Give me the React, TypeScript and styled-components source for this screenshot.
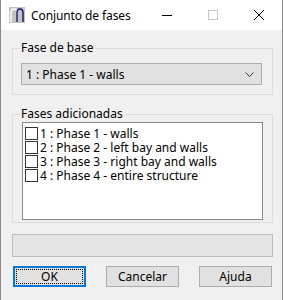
import styled, { createGlobalStyle } from "styled-components";

const Global = createGlobalStyle`
  html, body {
    margin: 0;
    padding: 0;
    background: #f0f0f0;
  }
  body {
    font-family: "Noto Sans", "Segoe UI", sans-serif;
    font-size: 12px;
    color: #000;
  }
`;

const Window = styled.div`
  width: 283px;
  height: 300px;
  box-sizing: border-box;
  border-left: 1px solid #8a8a8a;
  border-right: 1px solid #8a8a8a;
  background: #f0f0f0;
  display: flex;
  flex-direction: column;
  overflow: hidden;
`;

const TitleBar = styled.div`
  height: 30px;
  background: #fff;
  display: flex;
  align-items: center;
  padding-left: 8px;
  flex-shrink: 0;
`;

const Title = styled.span`
  margin-left: 6px;
  margin-right: auto;
  font-size: 12px;
  letter-spacing: -0.1px;
`;

const Caption = styled.div`
  width: 46px;
  height: 30px;
  flex-shrink: 0;
  display: flex;
  align-items: center;
  justify-content: center;
`;

const MinDash = styled.div`
  width: 10px;
  height: 0;
  border-top: 1px solid #000;
  margin-top: 1px;
`;

const Body = styled.div`
  padding: 11px 9px 0 11px;
  display: flex;
  flex-direction: column;
`;

const Group = styled.fieldset<{ $h: number }>`
  margin: 0;
  border: 1px solid #dcdcdc;
  padding: 0 9px 0 8px;
  height: ${(p) => p.$h}px;
  box-sizing: border-box;
  min-width: 0;
  & + & {
    margin-top: 12px;
  }
`;

const Legend = styled.legend`
  padding: 0 1px;
  margin-left: -1px;
  font-size: 12px;
  line-height: 14px;
`;

const Combo = styled.div`
  margin-top: 8px;
  margin-right: 1px;
  height: 22px;
  box-sizing: border-box;
  border: 1px solid #adadad;
  background: #e1e1e1;
  display: flex;
  align-items: center;
  padding-left: 4px;
  padding-right: 7px;
  justify-content: space-between;
`;

const ListBox = styled.div`
  margin-top: 1px;
  margin-left: 1px;
  height: 98px;
  box-sizing: border-box;
  border: 1px solid #828790;
  background: #fff;
  padding: 4px 2px;
  display: flex;
  flex-direction: column;
`;

const Item = styled.label`
  display: flex;
  align-items: flex-start;
  height: 14px;
  line-height: 14px;
  white-space: nowrap;
`;

const Box = styled.span`
  width: 13px;
  height: 13px;
  box-sizing: border-box;
  border: 1px solid #333;
  background: #fff;
  margin-right: 2px;
  flex-shrink: 0;
`;

const Status = styled.div`
  margin-top: 11px;
  height: 23px;
  box-sizing: border-box;
  border: 1px solid #bcbcbc;
  background: #e5e5e5;
`;

const Buttons = styled.div`
  margin-top: 9px;
  display: flex;
  justify-content: space-between;
  padding-left: 1px;
  padding-right: 1px;
`;

const Btn = styled.button<{ $def?: boolean }>`
  width: 73px;
  height: 21px;
  box-sizing: border-box;
  border: 1px solid ${(p) => (p.$def ? "#0078d7" : "#adadad")};
  background: #e1e1e1;
  font-family: "Noto Sans", "Segoe UI", sans-serif;
  font-size: 12px;
  padding: 0;
  color: #000;
  position: relative;
  ${(p) =>
    p.$def &&
    `
    box-shadow: inset 0 0 0 1px #0078d7;
    &::after {
      content: "";
      position: absolute;
      inset: 2px;
      border: 1px dotted #000;
    }
  `}
`;

const AppIcon = () => (
  <svg width="16" height="16" viewBox="0 0 16 16">
    <rect width="16" height="16" fill="#c3c3c3" />
    <path d="M2 15 V6 Q2 2 5 2 Q8 2 8 6 V15" fill="none" stroke="#fff" strokeWidth="1.5" />
    <path d="M8 15 V6 Q8 2 11 2 Q14 2 14 6 V15" fill="none" stroke="#1b1b6e" strokeWidth="1.5" />
  </svg>
);

const phases = [
  "1 : Phase 1 - walls",
  "2 : Phase 2 - left bay and walls",
  "3 : Phase 3 - right bay and walls",
  "4 : Phase 4 - entire structure",
];

export default function App() {
  return (
    <>
      <Global />
      <Window>
        <TitleBar>
          <AppIcon />
          <Title>Conjunto de fases</Title>
          <Caption>
            <MinDash />
          </Caption>
          <Caption>
            <svg width="10" height="10" viewBox="0 0 10 10">
              <rect x="0.5" y="0.5" width="9" height="9" fill="none" stroke="#c8c8c8" />
            </svg>
          </Caption>
          <Caption>
            <svg width="10" height="10" viewBox="0 0 10 10">
              <path d="M0 0 L10 10 M10 0 L0 10" stroke="#000" strokeWidth="1" />
            </svg>
          </Caption>
        </TitleBar>
        <Body>
          <Group $h={54}>
            <Legend>Fase de base</Legend>
            <Combo>
              <span>1 : Phase 1 - walls</span>
              <svg width="9" height="5" viewBox="0 0 9 5">
                <path d="M0.5 0.5 L4.5 4.5 L8.5 0.5" fill="none" stroke="#333" />
              </svg>
            </Combo>
          </Group>
          <Group $h={116}>
            <Legend>Fases adicionadas</Legend>
            <ListBox>
              {phases.map((p) => (
                <Item key={p}>
                  <Box />
                  {p}
                </Item>
              ))}
            </ListBox>
          </Group>
          <Status />
          <Buttons>
            <Btn $def>OK</Btn>
            <Btn>Cancelar</Btn>
            <Btn>Ajuda</Btn>
          </Buttons>
        </Body>
      </Window>
    </>
  );
}
